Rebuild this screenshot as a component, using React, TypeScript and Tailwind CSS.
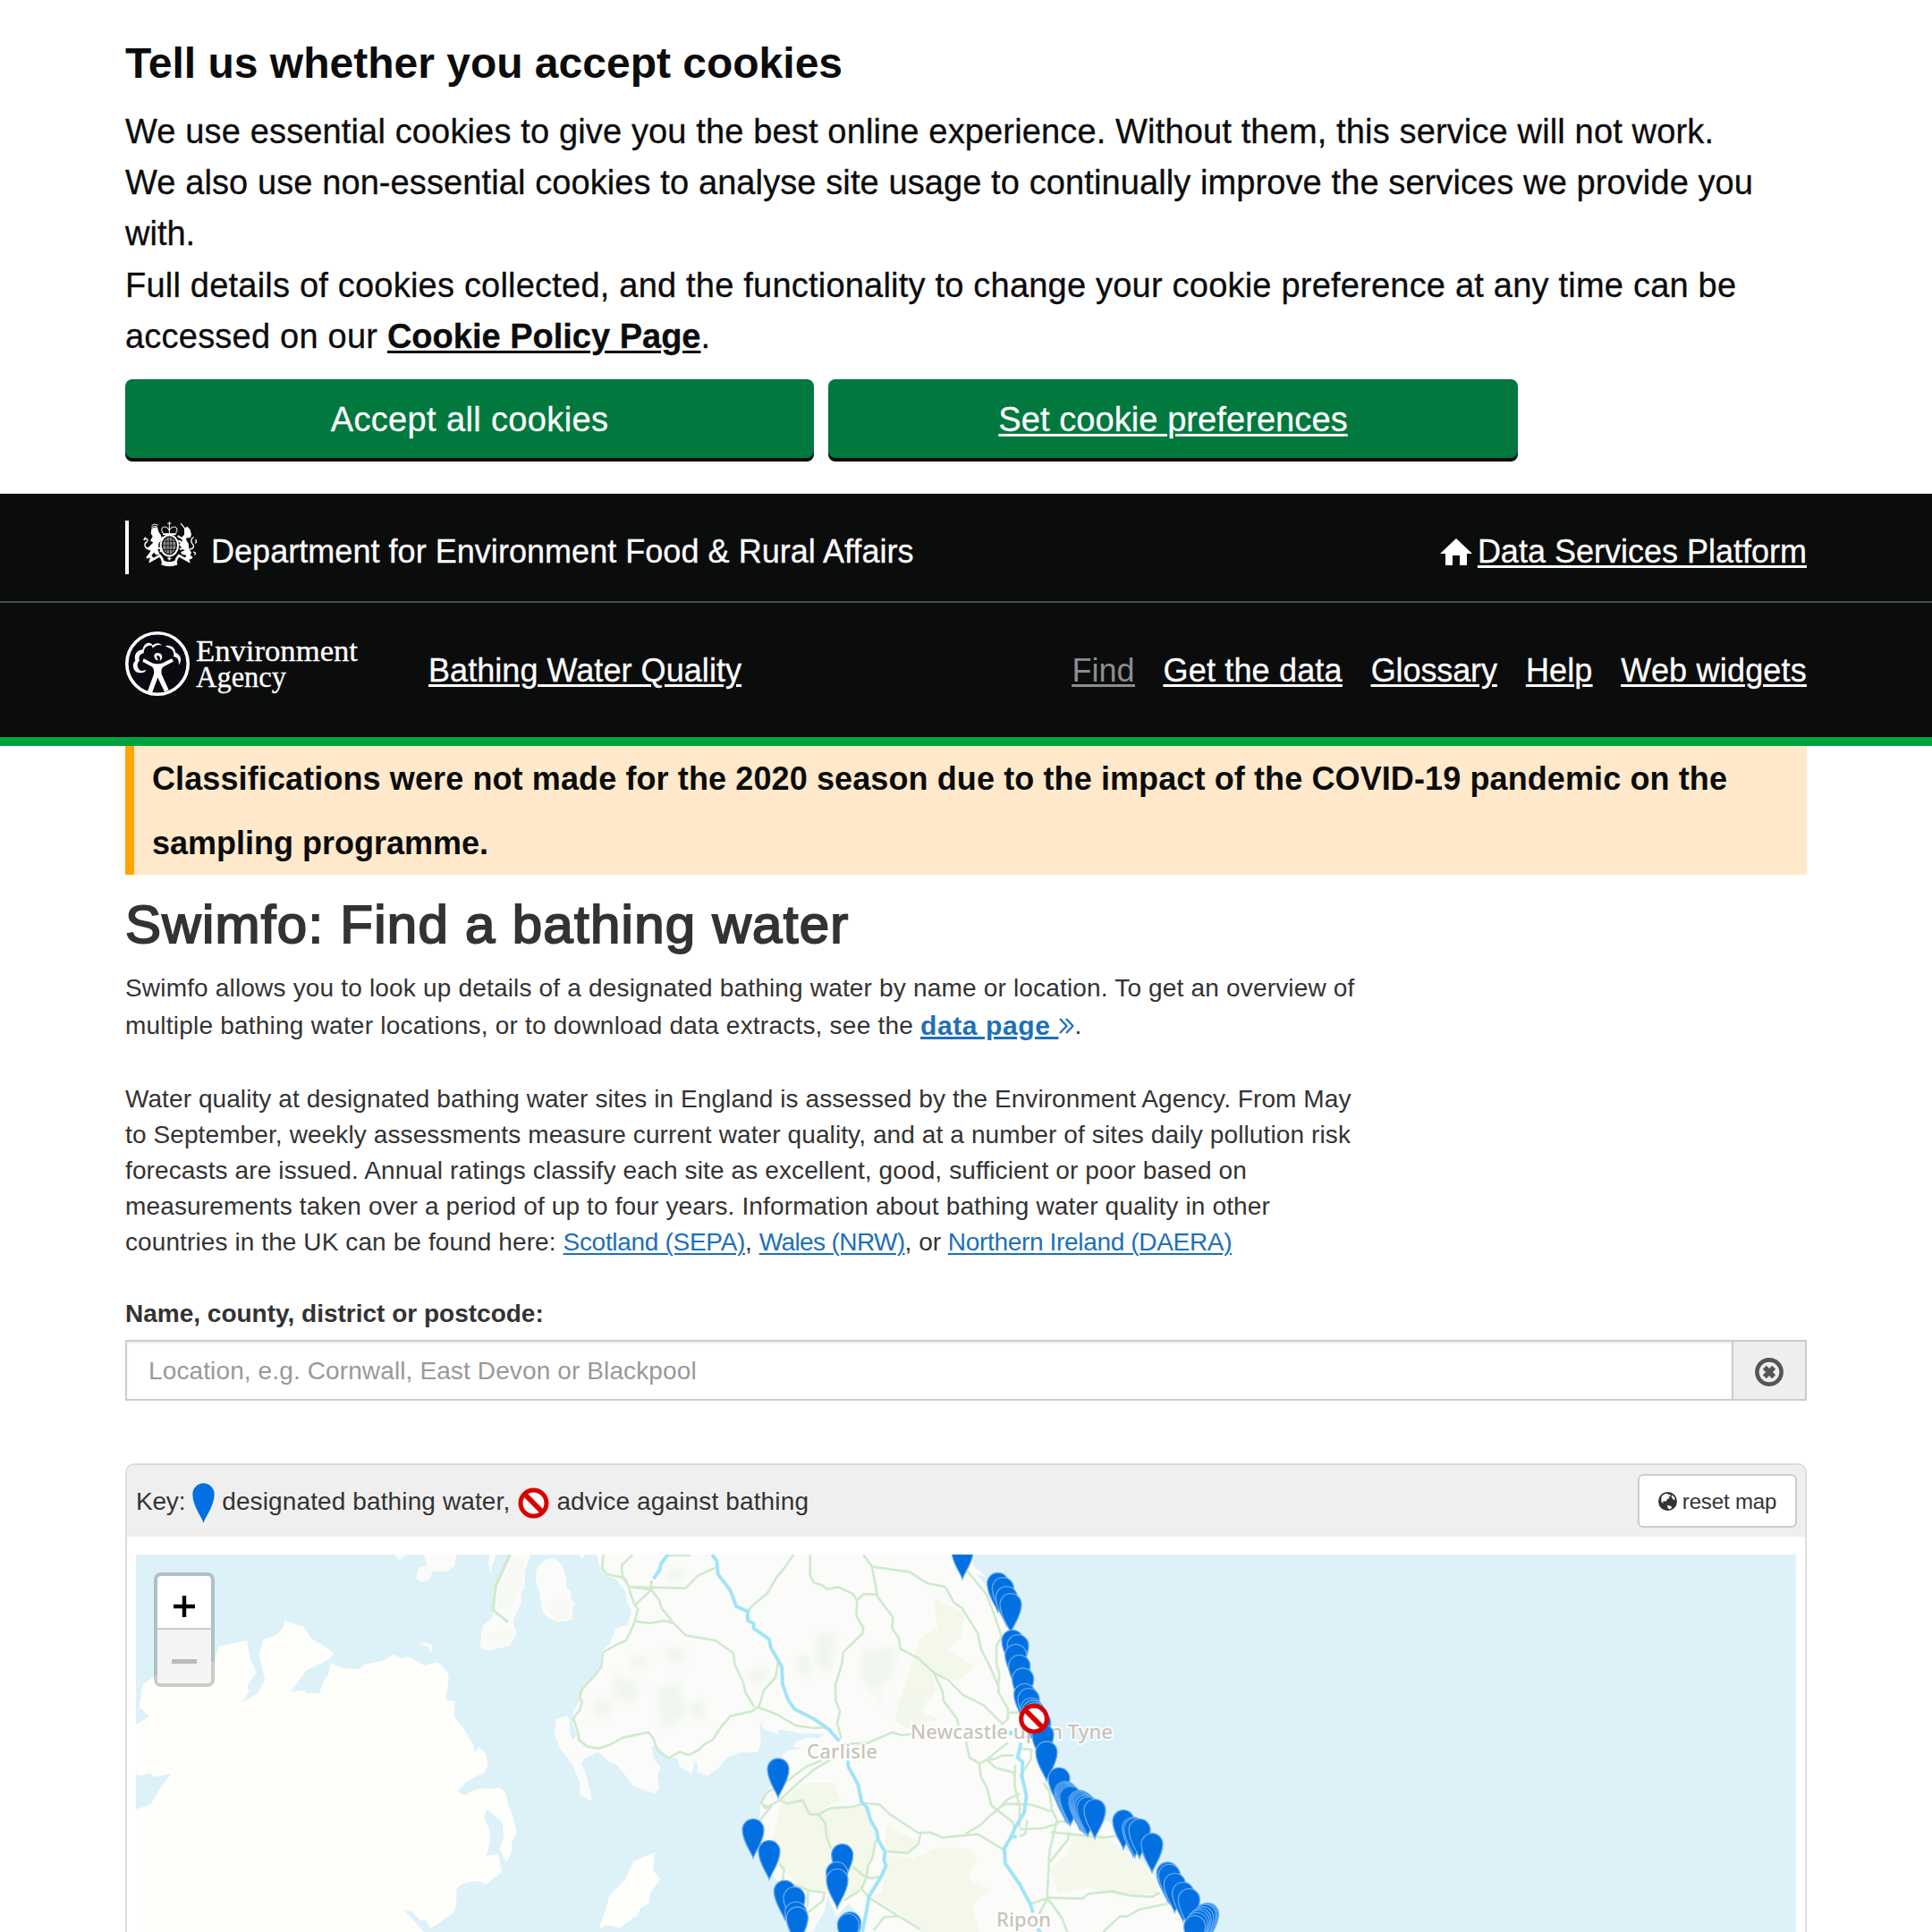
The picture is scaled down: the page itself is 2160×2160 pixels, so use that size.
import React from "react";

const PIN = "M0 132 C-6 112 -36 76 -36 37 A36 36 0 0 1 36 37 C36 76 6 112 0 132 Z";

// Pin heads (centre x, top y) on the western grid, three units to a pixel.
const westPins: [number, number][] = [
  [750, 737], [666, 940], [720, 1012], [965, 1024], [947, 1084], [948, 1108],
  [772, 1146], [804, 1168], [809, 1218], [814, 1235], [991, 1252], [985, 1258],
];

// Pin heads on the eastern grid, up to Tynemouth.
const northPins: [number, number][] = [
  [228, 4], [347, 114], [364, 130], [376, 160], [390, 184], [396, 306], [414, 322],
  [407, 354], [419, 390], [431, 434], [437, 486], [450, 502], [459, 534], [465, 542],
  [470, 550], [488, 580], [498, 622], [510, 680],
];

// Pin heads on the eastern grid, south of Tynemouth.
const eastPins: [number, number][] = [
  [552, 768], [573, 814], [577, 818], [581, 822], [585, 826], [590, 830],
  [621, 844], [626, 847], [631, 850], [636, 855], [641, 860], [648, 866], [672, 874],
  [768, 910], [800, 934], [806, 937], [822, 940], [864, 988], [916, 1085], [922, 1092],
  [940, 1122], [968, 1152], [988, 1174], [1051, 1222], [1047, 1224], [1042, 1226], [1034, 1234],
  [1026, 1240], [1020, 1246], [1014, 1254], [1007, 1264],
];

function Pins({ at }: { at: [number, number][] }) {
  return (
    <>
      {at.map(([x, y], i) => (
        <path key={i} d={PIN} transform={`translate(${x} ${y})`} fill="#0270e0" stroke="#62a9f2" strokeWidth="4" />
      ))}
    </>
  );
}

function NoEntry({ className }: { className?: string }) {
  return (
    <svg viewBox="0 0 104 104" className={className}>
      <circle cx="52" cy="52" r="43" fill="#fff" stroke="#d90000" strokeWidth="15" />
      <path d="M21 21 L83 83" stroke="#d90000" strokeWidth="17" />
    </svg>
  );
}

function Crest() {
  return (
    <svg viewBox="0 0 180 152" className="block h-[51px] w-[60px]" fill="none" stroke="#fff">
      <ellipse cx="88" cy="80" rx="29" ry="35" strokeWidth="6" />
      <ellipse cx="88" cy="80" rx="22" ry="28" fill="#8a8a8a" stroke="none" />
      <path d="M88 52 V108 M66 80 H110 M70 66 H106 M70 94 H106 M78 56 V104 M98 56 V104" stroke="#0b0c0c" strokeWidth="2.5" />
      <path d="M88 0 V40 M82 6 H94" strokeWidth="3" />
      <path d="M66 38 C58 26 64 16 74 18 C82 20 86 24 88 30 C90 24 94 20 102 18 C112 16 118 26 110 38" strokeWidth="4" strokeDasharray="5 2" />
      <path d="M66 42 H110" strokeWidth="6" />
      <path d="M28 14 Q36 4 50 12 M28 20 Q36 12 48 18" strokeWidth="3" />
      <path d="M28 24 Q36 16 48 20 L52 34 L60 46 L62 60 L52 74 L50 96 L56 110 L44 112 L36 104 L22 122 L12 118 L26 98 L10 92 L22 82 L34 70 L24 64 L32 50 L26 40 Z" fill="#fff" stroke="none" />
      <path d="M58 58 L68 52 M46 86 L62 92 L58 102" strokeWidth="6" />
      <path d="M22 90 C4 92 2 74 12 68 C18 62 16 54 4 60 M8 52 L2 62" strokeWidth="4" />
      <path d="M126 6 L146 30" strokeWidth="4" />
      <path d="M138 24 L148 16 L158 28 L162 44 L158 54 L146 54 L144 60 L152 74 L154 90 L162 104 L156 118 L164 124 L154 128 L142 112 L130 110 L126 102 L140 96 L126 84 L120 76 L132 66 L128 54 L138 44 Z" fill="#fff" stroke="none" />
      <path d="M132 58 L116 48 M130 70 L118 64 M140 90 L122 92" strokeWidth="6" />
      <path d="M156 92 C168 92 172 84 168 78 C158 68 160 56 170 52 M176 60 C180 66 178 74 174 70 M168 102 Q180 104 172 112" strokeWidth="4" />
      <path d="M12 122 Q24 112 30 122 Q24 130 24 132 L56 114 Q66 126 66 134 Q88 144 110 134 Q112 122 120 114 L152 132 Q150 124 144 122 Q154 112 164 122" strokeWidth="8" />
      <path d="M62 140 Q88 152 114 140" strokeWidth="9" />
      <path d="M88 118 V130 M82 124 H94" strokeWidth="4" />
    </svg>
  );
}

function AgencyLogo() {
  return (
    <svg viewBox="0 0 264 76" className="block h-[76px] w-[264px]">
      <circle cx="36" cy="37" r="34.2" fill="#0a0b12" stroke="#fff" strokeWidth="3.6" />
      <g transform="translate(-20 -145.5) scale(.33333)" fill="#fff">
        <path d="M135 640 L156 583 C158 568 154 558 146 556 L118 541 L122 530 L152 546 Q168 550 184 546 L216 530 L222 540 L192 556 C182 560 180 568 182 583 L206 636 L192 642 L169 594 L150 646 Z" />
        <path d="M158 526 C154 514 166 508 178 514 C188 522 184 534 176 538 C180 528 176 522 168 520 C164 522 166 532 172 536 C164 538 160 532 158 526 Z" />
        <path d="M183 486 C172 474 158 480 152 486 C146 472 124 474 118 500 C98 502 88 518 94 538 C80 548 86 578 108 578 C122 580 128 574 130 568 C122 572 112 574 106 566 C98 556 100 544 108 538 C104 526 108 514 122 512 C122 496 130 488 144 486 C150 486 152 492 152 496 C160 486 170 482 183 486 Z" />
        <path d="M194 488 C212 484 228 494 228 510 C246 518 252 534 240 552 C240 536 238 526 222 524 C226 512 220 498 206 494 Z" />
      </g>
      <g fill="#fff" stroke="#fff" strokeWidth=".3" fontFamily="'Liberation Serif', serif" fontSize="33">
        <text x="79" y="33.5" textLength="181" lengthAdjust="spacingAndGlyphs">Environment</text>
        <text x="79" y="62.5" textLength="101" lengthAdjust="spacingAndGlyphs">Agency</text>
      </g>
    </svg>
  );
}

function CoastMap() {
  return (
    <svg viewBox="152 1738 1856 422" className="block h-[422px] w-[1856px] bg-[#ddf1f9]">
      {/* Ireland, Man and the Scottish islands */}
      <g transform="translate(140 1720) scale(.433673 .333333)" fill="#fefffa">
        <path d="M28 625 L62 597 L36 565 L45 492 L75 462 L100 440 L230 412 L240 362 L314 342 L322 400 L338 450 L314 495 L320 512 L300 552 L342 518 L360 475 L345 390 L357 338 C385 330 410 315 410 274 L460 297 L480 335 L537 382 L528 404 L465 444 L428 514 L460 510 L468 520 L500 518 L516 468 L524 455 L531 416 Q550 438 603 438 L615 424 L670 408 L690 389 L712 402 L732 397 L770 425 L802 416 Q834 436 834 470 L826 542 L850 545 L848 598 L868 630 L898 692 L900 720 L910 700 Q935 712 934 765 L925 785 Q865 820 858 850 L876 862 Q910 830 940 840 L965 836 Q985 850 985 885 L998 925 L1009 988 L996 1020 L996 1050 L983 1088 L964 1040 L976 1000 L972 950 L932 908 L924 935 L940 980 L940 1020 L931 1064 L962 1060 L971 1118 L930 1162 L915 1150 Q860 1150 854 1180 Q856 1250 840 1262 L787 1308 L776 1282 L760 1280 L738 1250 L720 1248 L770 1320 L28 1320 L28 908 L66 892 L96 826 L120 788 L76 800 L64 786 L40 796 L28 790 Z" />
        <path d="M1310 1082 L1366 1053 L1360 1112 L1380 1142 L1353 1190 L1350 1225 L1328 1240 L1322 1262 L1275 1306 L1243 1296 L1220 1312 L1240 1240 L1248 1196 L1288 1146 Z" />
        <g fill="#fbfcf9">
          <path d="M770 54 H853 L850 90 L830 112 L792 110 L785 138 L765 147 L750 135 L757 98 L778 92 Z" />
          <path d="M695 54 H725 L705 75 Z M940 54 H955 L943 110 L935 90 Z" />
          <path d="M1060 105 Q1080 62 1104 66 Q1140 90 1137 165 L1150 180 L1148 205 L1160 215 L1153 235 L1153 272 L1120 280 Q1080 270 1074 235 L1068 180 L1058 140 Z" />
          <path d="M990 54 H1045 L1030 110 L1030 165 L1020 180 L1022 210 L1000 275 L1008 320 L992 360 L935 376 L915 365 L920 295 L948 265 L948 180 Z" />
          <path d="M757 356 L775 348 L793 360 L788 385 L780 362 Z" />
          <path d="M1170 54 H1188 L1176 68 Z" />
        </g>
        <g fill="#f7faf3">
          <path d="M1000 60 L1030 70 L1025 150 L995 240 L958 235 L965 160 Z" />
          <path d="M1085 235 L1120 200 L1150 215 L1150 270 L1115 275 Z M930 320 L1000 305 L995 340 L935 345 Z" />
        </g>
        <path d="M992 54 L955 160 L948 240 L987 281" fill="none" stroke="#cfeacd" strokeWidth="8" />
      </g>

      <g transform="translate(620 1720) scale(.333333)">
        {/* Great Britain */}
        <path
          fill="#fbfcfa"
          d="M140 40 L150 90 L165 120 L205 135 L240 180 L242 215 L258 240 L245 290 L205 300 L188 350 L160 375 L150 440 L95 495 L82 545 L62 580 L60 620 L75 660 L62 676 L50 650 L52 610 L40 595 L5 605 L0 650 L15 700 L60 760 L85 820 L85 860 L125 880 L120 850 L105 790 L90 755 L100 738 L145 716 L165 730 L175 745 L210 760 L245 805 L265 830 L335 857 L352 835 L345 800 L355 765 L335 740 L325 700 L340 690 L385 738 L410 735 L420 765 L460 790 L470 750 L480 755 L478 785 L515 795 L550 770 L580 735 L620 718 L680 718 L692 690 L688 612 L702 640 L745 655 L755 640 L830 655 L905 655 L890 670 L850 668 L810 680 L802 700 L830 702 L775 715 L755 740 L742 800 L715 845 L692 890 L685 950 L660 1010 L700 1080 L740 1140 L800 1210 L812 1330 L860 1330 L905 1250 L915 1200 L945 1265 L985 1225 L1010 1250 L1040 1330 L2170 1330 L2125 1290 L2058 1216 L2030 1170 L2004 1120 L1962 1074 L1908 1040 L1885 990 L1860 950 L1812 944 L1740 960 L1692 900 L1650 812 L1636 752 L1610 690 L1590 632 L1560 540 L1536 436 L1530 330 L1500 200 L1448 130 L1408 95 L1385 40 Z"
        />
        <path fill="#ddf1f9" d="M1416 120 L1455 132 L1462 165 L1445 160 Z" />
        {/* Moorland */}
        <g fill="#f3f8ea">
          <path d="M760 880 L840 820 L935 820 L960 880 L900 905 L1040 900 L1075 1000 L1055 1130 L1010 1200 L900 1190 L840 1180 L765 1110 L725 1040 L745 950 Z" />
          <path d="M1270 200 L1375 250 L1365 330 L1320 370 L1410 430 L1350 480 L1265 450 L1280 510 L1225 580 L1290 605 L1180 640 L1140 610 L1170 510 L1210 380 L1230 330 L1285 300 Z" />
          <path d="M1110 965 L1210 1010 L1220 1040 L1185 1050 L1110 1045 Z" />
          <path d="M1110 1060 L1200 1075 L1290 1035 L1380 1040 L1420 1070 L1385 1140 L1460 1180 L1400 1230 L1425 1320 L1225 1320 L1150 1250 L1060 1200 L1100 1190 Z" />
          <path d="M1740 990 L1840 990 L1900 1040 L1965 1080 L2010 1140 L2030 1190 L1890 1200 L1800 1170 L1690 1190 L1660 1110 L1720 1060 Z" />
        </g>
        {/* Woodland, with feathered edges */}
        <g fill="#f0f6ed" className="blur-[10px]">
          <path d="M200 460 L280 480 L270 550 L200 540 Z M370 370 L430 360 L440 410 L390 420 Z M880 320 L945 320 L930 450 L870 420 Z M1030 380 L1150 360 L1130 470 L1080 500 L1110 570 L1030 470 Z" />
          <path d="M640 450 L720 430 L700 490 L650 480 Z M340 500 L420 480 L440 600 L360 640 Z M820 380 L860 400 L850 470 L805 440 Z M140 540 L190 550 L180 600 L130 590 Z" />
          <path d="M1150 540 L1220 530 L1230 600 L1160 600 Z M250 400 L300 390 L310 430 L260 440 Z M450 560 L500 540 L510 600 L460 610 Z M380 100 L440 110 L420 140 L370 140 Z" />
        </g>
        {/* Trunk roads */}
        <g fill="none" stroke="#cfeacd" strokeWidth="8" strokeLinejoin="round">
          <path d="M163 54 L160 100 L175 120 L235 132 L250 165 L255 185 L268 222 L280 238 L265 290 L240 342 L205 358 L162 382 L157 430 L130 465 L92 505 L85 535 L92 548 L85 575 L63 603 L78 650 L82 676 L110 698 L148 705 L185 692 L230 668 L315 650 L332 672 L345 712 L383 737 L420 716 L450 727 L485 708 L500 692 L530 676 L560 630 L590 596 L660 580 L682 566 L715 578 L745 590 L810 628 L870 636 L910 634" />
          <path d="M262 54 L225 90 L228 130 L250 162 L325 172 L325 140 M325 172 L268 225 M325 172 L350 205 L360 235 L400 285 L440 325 L540 342 L600 385 L605 425 L632 480 L640 515 L670 566 M268 278 L320 284 L370 276 L400 285 M250 162 L440 167 L480 125 L543 97 M375 57 L455 57" />
          <path d="M802 54 L770 100 L745 130 L712 186 L670 220 L648 243 M750 415 L742 465 L702 510 L685 565" />
          <path d="M858 54 L857 125 L870 148 L900 158 L912 170 L950 163 L1000 185 L1015 208 L1012 260 L1036 300 L1033 318 L968 382 L964 420 L942 490 L943 545 L957 580 L948 620 L962 672" />
          <path d="M1080 187 L1035 187 L1015 208 M1035 54 L1065 95 L1083 195 L1135 265 L1132 300 L1155 335 L1160 370 L1220 402 L1272 450 L1320 475 L1370 525 L1440 560 L1500 620 M1065 95 L1190 112 L1250 150 L1310 162 L1340 215 L1368 235 L1420 320 L1430 370 L1465 440 L1490 500 L1488 515 L1520 570 L1520 605 L1500 625" />
          <path d="M1385 110 L1450 190 L1480 270 L1500 330 L1482 360 L1482 420 L1492 455 L1487 500 M1520 585 L1560 583" />
          <path d="M1272 450 L1302 515 L1305 545 L1350 605 L1356 628 M962 690 L1050 686 L1132 650 L1165 660 L1200 656" />
          <path d="M1380 682 L1392 735 L1425 755 L1430 800 L1450 835 L1465 895 L1535 950 L1545 975 M1425 755 L1450 742 L1520 685 M1450 742 L1480 770 L1540 785 L1542 800 M1455 742 L1475 740 L1500 728 L1540 728 M1545 760 L1543 830 L1560 900 L1560 970 M1560 705 L1600 708 L1598 740 L1560 800" />
          <path d="M895 745 L845 765 L785 810 L715 850 L693 885 L707 905 L755 878 L815 822 L870 775 L925 742 M685 950 L725 900 L700 895 M755 878 L780 890 L832 878 L855 925 L885 925 L925 905 L1000 900 L1040 888 L1090 892 L1125 925 L1220 988 L1260 986 L1300 1003 L1420 992 L1508 1045" />
          <path d="M885 925 L908 955 L912 1000 L928 1042 M1228 990 L1220 1025 L1185 1055 L1115 1050 M1380 990 L1430 960 L1460 930 L1480 915 L1520 875 L1560 855 M1490 905 L1515 890 L1600 893 L1665 915" />
          <path d="M1640 820 L1660 850 L1668 910 L1685 945 L1660 1050 L1652 1205 L1700 1270 L1720 1320 M1685 950 L1720 950 M1560 975 L1640 972 L1690 955 M1725 985 L1722 1010 L1662 1085 M1665 985 L1840 1003 L1890 998 M1585 945 L1580 990 L1560 1000" />
          <path d="M1600 1225 L1655 1205 L1770 1208 L1790 1192 L1870 1183 L1930 1198 L2005 1202 L2030 1188 M1840 1320 L1895 1268 L1920 1268 L1960 1245 L2055 1225 M1655 1205 L1625 1260" />
          <path d="M1078 1010 L1065 1075 L1050 1100 L1045 1140 L1030 1175 L1055 1205 L1150 1265 L1225 1310 M1000 1100 L1035 1130 L1060 1140 L1090 1135 M970 1215 L1025 1180 M1070 1315 L1105 1270 L1150 1268 M752 1090 L770 1110 L765 1145 L850 1180 L905 1188 L900 1215 L850 1255 M850 1180 L848 1235 M1140 1260 L1160 1270" />
        </g>
        {/* Motorways */}
        <g fill="none" stroke="#a1e4f8" strokeWidth="12" strokeLinejoin="round">
          <path d="M380 54 L357 85 L353 105 L332 135" />
          <path d="M528 54 L544 75 L548 120 L590 175 L610 228 L648 245 L648 275 L668 285 L668 302 L720 338 L725 365 L762 430 L765 490 L785 545 L805 572 L870 605 L920 640 L955 680 M984 745 L985 765 L1018 825 L1030 885 L1048 902 L1060 945 L1080 980 L1085 1010 L1108 1050 L1105 1080 L1112 1097 L1095 1135 L1055 1200 L1048 1240 L1032 1320" />
          <path d="M1530 645 L1530 660 M1565 685 L1553 735 L1570 750 L1568 800 L1583 865 L1575 920 L1545 970 L1530 1003 L1508 1040 L1512 1090 L1560 1160 L1595 1225 L1605 1255 M1525 1002 L1550 1000 M1620 1308 L1632 1325" />
        </g>
      </g>

      <g fill="#c8c3b9" stroke="#fff" strokeWidth="4" strokeOpacity=".75" paintOrder="stroke" fontFamily="'Noto Sans', sans-serif" fontSize="22" fontWeight="500">
        <text x="902" y="1965.5" textLength="79">Carlisle</text>
        <text x="1018" y="1944" textLength="226">Newcastle upon Tyne</text>
        <text x="1114" y="2153.5" textLength="61">Ripon</text>
      </g>

      <g transform="translate(620 1720) scale(.333333)">
        <Pins at={westPins} />
      </g>
      <g transform="translate(1000 1720) scale(.333333)">
        <Pins at={northPins} />
        <circle cx="468" cy="605" r="43" fill="#fff" stroke="#d90000" strokeWidth="15" />
        <path d="M437 574 L499 636" stroke="#d90000" strokeWidth="17" />
        <Pins at={eastPins} />
      </g>
    </svg>
  );
}

const link = "text-[#1d70b8] underline decoration-2 underline-offset-[3px]";

export default function App() {
  return (
    <div className="h-[2160px] w-[2160px] overflow-hidden bg-white font-['Liberation_Sans',Arial,sans-serif] whitespace-nowrap text-[#333]">
      <section className="h-[552px] px-[140px] pt-[41px] text-[#0b0c0c]">
        <h2 className="mb-[18px] text-[48px] leading-[60px] font-bold">Tell us whether you accept cookies</h2>
        <div className="text-[38px] leading-[57.2px] [-webkit-text-stroke:0.3px_#0b0c0c]">
          <p className="tracking-[0.144px]">We use essential cookies to give you the best online experience. Without them, this service will not work.</p>
          <p className="tracking-[0.1px]">We also use non-essential cookies to analyse site usage to continually improve the services we provide you</p>
          <p>with.</p>
          <p className="tracking-[0.21px]">Full details of cookies collected, and the functionality to change your cookie preference at any time can be</p>
          <p>
            <span className="tracking-[0.22px]">accessed on our </span>
            <a className="font-bold underline decoration-[3px] underline-offset-[3px]">Cookie Policy Page</a>.
          </p>
        </div>
        <div className="mt-[19px] flex gap-4 text-[38px] text-white [-webkit-text-stroke:0.3px_#fff]">
          <button className="h-[88px] w-[770px] rounded-[8px] bg-[#00783e] pt-[2px] tracking-[0.36px] shadow-[0_4px_0_#0b0c0c]">Accept all cookies</button>
          <button className="h-[88px] w-[771px] rounded-[8px] bg-[#00783e] pt-[2px] tracking-[0.08px] underline decoration-[3px] underline-offset-[3px] shadow-[0_4px_0_#0b0c0c]">Set cookie preferences</button>
        </div>
      </section>

      <header className="border-b-[10px] border-[#00a33b] bg-[#0b0c0c] text-[36px] leading-[50px] text-white [-webkit-text-stroke:0.3px_#fff]">
        <div className="flex h-[122px] items-center justify-between border-b-2 border-[#484c50] px-[140px]">
          <div className="flex items-center">
            <div className="h-[60px] w-1 bg-white" />
            <div className="mb-[7px] ml-4"><Crest /></div>
            <span className="mt-[9px] ml-4 tracking-[0.04px]">Department for Environment Food &amp; Rural Affairs</span>
          </div>
          <div className="mt-[9px] flex items-center">
            <svg viewBox="0 0 36 30" className="mr-[6px] h-[30px] w-9" fill="#fff">
              <path d="M18 0 L36 17 H30 V30 H22 V19 H14 V30 H6 V17 H0 Z" />
            </svg>
            <a className="underline decoration-[3px] underline-offset-[3px]">Data Services Platform</a>
          </div>
        </div>
        <div className="flex h-[150px] items-center px-[140px] pt-[2px]">
          <div className="mb-[15px] w-[339px]"><AgencyLogo /></div>
          <a className="tracking-[0.06px] underline decoration-[3px] underline-offset-[3px]">Bathing Water Quality</a>
          <nav className="ml-auto flex gap-8 underline decoration-[3px] underline-offset-[3px]">
            <a className="text-[#8c8c90] [-webkit-text-stroke:0px]">Find</a>
            <a className="tracking-[0.16px]">Get the data</a>
            <a className="tracking-[-0.1px]">Glossary</a>
            <a className="tracking-[0.1px]">Help</a>
            <a className="tracking-[0.2px]">Web widgets</a>
          </nav>
        </div>
      </header>

      <main className="px-[140px]">
        <div className="h-36 border-l-[10px] border-[#ffa500] bg-[#ffe9ca] pt-[1px] pl-5 text-[36px] leading-[72px] font-bold text-[#0b0c0c]">
          <p className="tracking-[0.108px]">Classifications were not made for the 2020 season due to the impact of the COVID-19 pandemic on the</p>
          <p>sampling programme.</p>
        </div>
        <h1 className="mt-[23px] mb-[18px] text-[60px] leading-[66px] tracking-[1.28px] [-webkit-text-stroke:2px_#333]">Swimfo: Find a bathing water</h1>

        <div className="text-[28px] leading-[40px]">
          <p className="tracking-[0.178px]">Swimfo allows you to look up details of a designated bathing water by name or location. To get an overview of</p>
          <p className="mt-[2px] flex">
            <span className="whitespace-pre tracking-[0.22px]">multiple bathing water locations, or to download data extracts, see the </span>
            <a className="text-[30px] font-bold whitespace-pre tracking-[0.6px] text-[#1d70b8] underline decoration-[3px] underline-offset-[2px]">data page </a>
            <svg viewBox="0 0 17 18" className="mt-[11px] ml-[1px] h-[18px] w-[17px]" fill="none" stroke="#1d70b8" strokeWidth="2.2">
              <path d="M1 1 L8.5 9 L1 17 M8 1 L15.5 9 L8 17" />
            </svg>
            <span>.</span>
          </p>
          <div className="mt-[42px]">
            <p className="tracking-[0.082px]">Water quality at designated bathing water sites in England is assessed by the Environment Agency. From May</p>
            <p className="tracking-[0.109px]">to September, weekly assessments measure current water quality, and at a number of sites daily pollution risk</p>
            <p className="tracking-[0.12px]">forecasts are issued. Annual ratings classify each site as excellent, good, sufficient or poor based on</p>
            <p className="tracking-[0.143px]">measurements taken over a period of up to four years. Information about bathing water quality in other</p>
            <p>
              <span className="tracking-[0.1px]">countries in the UK can be found here: </span>
              <a className={`${link} tracking-[-0.3px]`}>Scotland (SEPA)</a>,{" "}
              <a className={`${link} tracking-[-0.6px]`}>Wales (NRW)</a>, or{" "}
              <a className={`${link} tracking-[-0.33px]`}>Northern Ireland (DAERA)</a>
            </p>
          </div>
          <label className="mt-10 block font-bold">Name, county, district or postcode:</label>
        </div>

        <div className="mt-[9px] flex h-[68px] border-2 border-[#ccc]">
          <div className="flex-1 pl-6 text-[28px] leading-[65px] tracking-[0.12px] text-[#999] shadow-[inset_0_2px_2px_rgba(0,0,0,0.075)]">Location, e.g. Cornwall, East Devon or Blackpool</div>
          <button className="flex w-[82px] items-center justify-center border-l-2 border-[#ccc] bg-[#eee]">
            <svg viewBox="0 0 32 32" className="mt-[3px] h-8 w-8" fill="none" stroke="#555">
              <circle cx="16" cy="16" r="13.6" strokeWidth="4.6" />
              <path d="M10.8 10.8 L21.2 21.2 M21.2 10.8 L10.8 21.2" strokeWidth="5.6" />
            </svg>
          </button>
        </div>

        <section className="mt-[70px] h-[600px] rounded-[10px] border-2 border-[#ddd]">
          <div className="flex h-20 items-center rounded-t-[8px] bg-[#efefef] px-[10px] text-[28px]">
            <span className="mt-[1px] tracking-[-0.2px]">Key:</span>
            <svg viewBox="-37 0 74 133" className="mt-[4px] ml-[8px] h-[45px] w-[25px]" fill="#0270e0">
              <path d={PIN} />
            </svg>
            <span className="mt-[1px] ml-2 tracking-[0.12px]">designated bathing water,</span>
            <NoEntry className="mt-[4px] ml-[9px] h-[35px] w-[35px]" />
            <span className="mt-[1px] ml-2 tracking-[0.14px]">advice against bathing</span>
            <button className="mr-[-1px] ml-auto flex h-[60px] w-[178px] items-center justify-center gap-[6px] rounded-[6px] border-2 border-[#ccc] bg-white text-[24px] tracking-[-0.15px]">
              <svg viewBox="0 0 60 60" className="h-[21px] w-[21px]">
                <circle cx="30" cy="30" r="30" fill="#333" />
                <path fill="#fff" d="M11 13 L22 6 L32 6 L30 10 L37 8 L40 13 L33 16 L36 20 L29 23 L24 31 L19 29 L14 31 L17 38 L9 30 Z M44 9 L53 19 L52 27 L46 22 L42 16 Z M28 42 L40 45 L44 51 L36 55 L31 53 Z" />
              </svg>
              <span className="pt-[1px]">reset map</span>
            </button>
          </div>
          <div className="relative mx-[10px] mt-5">
            <CoastMap />
            <div className="absolute top-5 left-5 h-32 w-[68px] overflow-hidden rounded-[8px] border-4 border-black/20 bg-white bg-clip-padding">
              <div className="flex h-[60px] items-center justify-center border-b-2 border-[#ccc]">
                <svg viewBox="0 0 24 24" className="mt-[10px] h-6 w-6" stroke="#000" strokeWidth="4.4">
                  <path d="M0 12 H24 M12 0 V24" />
                </svg>
              </div>
              <div className="flex h-[60px] items-center justify-center bg-[#f4f4f4]">
                <div className="mt-[10px] h-[5px] w-7 bg-[#bbb]" />
              </div>
            </div>
          </div>
        </section>
      </main>
    </div>
  );
}
